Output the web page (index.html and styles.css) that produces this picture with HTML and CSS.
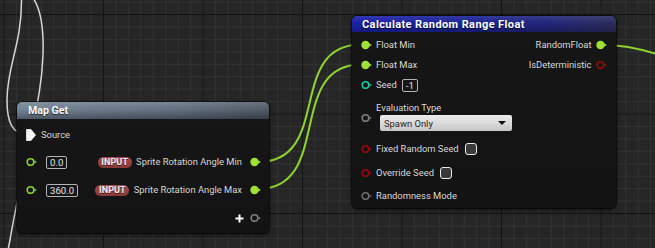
FILE: index.html
```html
<!DOCTYPE html>
<html>
<head>
<meta charset="utf-8">
<link rel="stylesheet" href="styles.css">
</head>
<body>
<div class="canvas">
  <svg class="wires" width="655" height="248" viewBox="0 0 655 248">
    <path class="wire-exec" d="M21.5,-2 C22,45 7,65 7,100 C7,122 12,134 27,134"/>
    <path class="wire-exec" d="M33,-2 C40,8 44,25 43,55 C42,85 36,110 30,140 C22,180 14,215 10,240 L8,250"/>
    <path class="wire-float" d="M258,162 C333,162 286,44.5 361,44.5"/>
    <path class="wire-float" d="M258,189 C333,189 286,64.5 361,64.5"/>
    <path class="wire-float" d="M604,45 C640,45 680,60 720,80"/>
  </svg>

  <div class="node node-mapget">
    <div class="node-header header-mapget">Map Get</div>
    <div class="mapget-body">
      <div class="row row-left">
        <svg class="pin-exec" width="10" height="12" viewBox="0 0 10 12"><path d="M0.5,0.5 H5 L9.5,6 L5,11.5 H0.5 Z"/></svg>
        <span class="label">Source</span>
      </div>
      <div class="row row-split">
        <div class="side">
          <svg class="pin pin-hollow pin-green" width="11" height="10" viewBox="0 0 11 10"><circle cx="4.5" cy="5" r="3.3"/><polygon points="8.6,3.4 10.8,5 8.6,6.6"/></svg>
          <span class="valbox">0.0</span>
        </div>
        <div class="side">
          <span class="badge">INPUT</span>
          <span class="label">Sprite Rotation Angle Min</span>
          <svg class="pin pin-filled pin-green" width="11" height="10" viewBox="0 0 11 10"><circle cx="4.5" cy="5" r="4.2"/><polygon points="8.2,3.2 10.8,5 8.2,6.8"/></svg>
        </div>
      </div>
      <div class="row row-split">
        <div class="side">
          <svg class="pin pin-hollow pin-green" width="11" height="10" viewBox="0 0 11 10"><circle cx="4.5" cy="5" r="3.3"/><polygon points="8.6,3.4 10.8,5 8.6,6.6"/></svg>
          <span class="valbox">360.0</span>
        </div>
        <div class="side">
          <span class="badge">INPUT</span>
          <span class="label">Sprite Rotation Angle Max</span>
          <svg class="pin pin-filled pin-green" width="11" height="10" viewBox="0 0 11 10"><circle cx="4.5" cy="5" r="4.2"/><polygon points="8.2,3.2 10.8,5 8.2,6.8"/></svg>
        </div>
      </div>
      <div class="row row-add">
        <svg class="plus" width="9" height="9" viewBox="0 0 9 9"><path d="M4.5,0.5 V8.5 M0.5,4.5 H8.5"/></svg>
        <svg class="pin pin-hollow pin-gray" width="11" height="10" viewBox="0 0 11 10"><circle cx="4.5" cy="5" r="3.3"/><polygon points="8.6,3.4 10.8,5 8.6,6.6"/></svg>
      </div>
    </div>
  </div>

  <div class="node node-calc">
    <div class="node-header header-calc">Calculate Random Range Float</div>
    <div class="calc-body">
      <div class="col col-in">
        <div class="crow">
          <svg class="pin pin-filled pin-green" width="11" height="10" viewBox="0 0 11 10"><circle cx="4.5" cy="5" r="4.2"/><polygon points="8.2,3.2 10.8,5 8.2,6.8"/></svg>
          <span class="label">Float Min</span>
        </div>
        <div class="crow">
          <svg class="pin pin-filled pin-green" width="11" height="10" viewBox="0 0 11 10"><circle cx="4.5" cy="5" r="4.2"/><polygon points="8.2,3.2 10.8,5 8.2,6.8"/></svg>
          <span class="label">Float Max</span>
        </div>
        <div class="crow crow-seed">
          <svg class="pin pin-hollow pin-teal" width="11" height="10" viewBox="0 0 11 10"><circle cx="4.5" cy="5" r="3.3"/><polygon points="8.6,3.4 10.8,5 8.6,6.6"/></svg>
          <span class="label">Seed</span>
          <span class="valbox valbox-seed">-1</span>
        </div>
        <div class="crow crow-eval">
          <svg class="pin pin-hollow pin-gray" width="11" height="10" viewBox="0 0 11 10"><circle cx="4.5" cy="5" r="3.3"/><polygon points="8.6,3.4 10.8,5 8.6,6.6"/></svg>
          <div class="eval">
            <span class="label">Evaluation Type</span>
            <div class="dropdown"><span>Spawn Only</span><span class="caret"></span></div>
          </div>
        </div>
        <div class="crow crow-check">
          <svg class="pin pin-hollow pin-red" width="11" height="10" viewBox="0 0 11 10"><circle cx="4.5" cy="5" r="3.3"/><polygon points="8.6,3.4 10.8,5 8.6,6.6"/></svg>
          <span class="label">Fixed Random Seed</span>
          <span class="checkbox"></span>
        </div>
        <div class="crow crow-check">
          <svg class="pin pin-hollow pin-red" width="11" height="10" viewBox="0 0 11 10"><circle cx="4.5" cy="5" r="3.3"/><polygon points="8.6,3.4 10.8,5 8.6,6.6"/></svg>
          <span class="label">Override Seed</span>
          <span class="checkbox"></span>
        </div>
        <div class="crow crow-last">
          <svg class="pin pin-hollow pin-dim" width="11" height="10" viewBox="0 0 11 10"><circle cx="4.5" cy="5" r="3.3"/><polygon points="8.6,3.4 10.8,5 8.6,6.6"/></svg>
          <span class="label">Randomness Mode</span>
        </div>
      </div>
      <div class="col col-out">
        <div class="crow">
          <span class="label">RandomFloat</span>
          <svg class="pin pin-filled pin-green" width="11" height="10" viewBox="0 0 11 10"><circle cx="4.5" cy="5" r="4.2"/><polygon points="8.2,3.2 10.8,5 8.2,6.8"/></svg>
        </div>
        <div class="crow">
          <span class="label">IsDeterministic</span>
          <svg class="pin pin-hollow pin-red" width="11" height="10" viewBox="0 0 11 10"><circle cx="4.5" cy="5" r="3.3"/><polygon points="8.6,3.4 10.8,5 8.6,6.6"/></svg>
        </div>
      </div>
    </div>
  </div>
</div>
</body>
</html>
```

FILE: styles.css
```css
html, body {
  margin: 0;
  padding: 0;
  background: #262626;
}

.canvas {
  position: relative;
  width: 655px;
  height: 248px;
  overflow: hidden;
  background-color: #262626;
  background-image:
    linear-gradient(90deg, #131313 1px, transparent 1px),
    linear-gradient(180deg, #131313 1px, transparent 1px),
    linear-gradient(90deg, #323232 1px, transparent 1px),
    linear-gradient(180deg, #323232 1px, transparent 1px);
  background-size: 99.5px 99.5px, 99.5px 99.5px, 12.4375px 12.4375px, 12.4375px 12.4375px;
  background-position: 103px 14px, 103px 14px, 103px 14px, 103px 14px;
  font-family: Roboto, "Liberation Sans", sans-serif;
}

.wires {
  position: absolute;
  left: 0;
  top: 0;
}

.wire-exec {
  fill: none;
  stroke: #d6d6d6;
  stroke-width: 1.5;
}

.wire-float {
  fill: none;
  stroke: #8fd42e;
  stroke-width: 2;
}

.node {
  position: absolute;
  box-sizing: border-box;
  display: flex;
  flex-direction: column;
  background: linear-gradient(180deg, #151615 0%, #121312 100%);
  border-radius: 5px;
  box-shadow: 0 0 0 1px rgba(0, 0, 0, 0.6), 0 2px 5px rgba(0, 0, 0, 0.55);
  color: #d8d8d8;
  font-size: 9.4px;
}

.node-mapget {
  left: 17px;
  top: 102px;
  width: 252px;
  height: 131px;
}

.node-calc {
  left: 352px;
  top: 16px;
  width: 264px;
  height: 192px;
}

.node-header {
  flex: none;
  display: flex;
  align-items: center;
  font-weight: bold;
  font-size: 10.6px;
  color: #ffffff;
  border-radius: 5px 5px 0 0;
  text-shadow: 0 1px 1px rgba(0, 0, 0, 0.7);
}

.header-mapget {
  height: 17px;
  padding-left: 11px;
  background:
    linear-gradient(180deg, rgba(255, 255, 255, 0.18) 0%, rgba(255, 255, 255, 0.05) 45%, rgba(0, 0, 0, 0.28) 100%),
    linear-gradient(90deg, #6c7c90 0%, #5c6a7b 60%, #48525e 100%);
}

.header-calc {
  height: 16px;
  padding-left: 10px;
  font-size: 11px;
  letter-spacing: 0.4px;
  background:
    linear-gradient(180deg, rgba(255, 255, 255, 0.1) 0%, rgba(0, 0, 0, 0) 45%, rgba(0, 0, 0, 0.25) 100%),
    linear-gradient(90deg, #1b22aa 0%, #1c2296 45%, #22267a 75%, #2a2c5c 100%);
}

.label {
  white-space: nowrap;
  color: #d9d9d9;
  line-height: 12px;
}

.pin {
  flex: none;
  display: block;
}

.pin-filled circle,
.pin-filled polygon {
  stroke: none;
}

.pin-hollow circle {
  fill: none;
  stroke-width: 1.6;
}

.pin-green circle { fill: #9fe235; }
.pin-green polygon { fill: #9fe235; }
.pin-hollow.pin-green circle { fill: none; stroke: #8fd62c; }
.pin-hollow.pin-green polygon { fill: #8fd62c; }

.pin-teal circle { stroke: #22c9a2; }
.pin-teal polygon { fill: #22c9a2; }

.pin-red circle { stroke: #980b0b; }
.pin-red polygon { fill: #980b0b; }

.pin-gray circle { stroke: #808080; }
.pin-gray polygon { fill: #808080; }

.pin-dim circle { stroke: #6e6e6e; }
.pin-dim polygon { fill: #6e6e6e; }

.pin-exec {
  flex: none;
  display: block;
}

.pin-exec path {
  fill: #f2f2f2;
  stroke: #f2f2f2;
  stroke-width: 0.8;
  stroke-linejoin: round;
}

/* Map Get body */
.mapget-body {
  display: grid;
  grid-template-rows: 20px 22px 22px 22px;
  row-gap: 6px;
  padding-top: 6px;
}

.row {
  display: flex;
  align-items: center;
}

.row-left {
  padding-left: 9px;
  gap: 5px;
}

.row-split {
  justify-content: space-between;
  padding-left: 9px;
  padding-right: 8px;
}

.side {
  display: flex;
  align-items: center;
}

.side .pin-hollow + .valbox {
  margin-left: 9px;
}

.side .badge + .label {
  margin-left: 4.5px;
}

.side .label + .pin {
  margin-left: 8px;
}

.row-add {
  justify-content: flex-end;
  padding-right: 8px;
  gap: 6px;
}

.plus path {
  stroke: #ffffff;
  stroke-width: 2;
  fill: none;
}

.valbox {
  box-sizing: border-box;
  height: 13px;
  line-height: 11px;
  padding: 0 3px;
  border: 1px solid #b4b4b4;
  border-radius: 2px;
  background: #161616;
  color: #e4e4e4;
  font-size: 9.6px;
}

.badge {
  box-sizing: border-box;
  height: 11px;
  line-height: 11px;
  padding: 0 3.5px;
  border-radius: 6px;
  background: linear-gradient(180deg, #a04c4c 0%, #8a3838 100%);
  color: #f4f0f0;
  font-weight: bold;
  font-size: 9px;
  letter-spacing: 0.1px;
  text-shadow: 0 1px 0 rgba(0, 0, 0, 0.6);
}

/* Calculate body */
.calc-body {
  display: flex;
  justify-content: space-between;
  padding-top: 2.5px;
}

.col {
  display: flex;
  flex-direction: column;
}

.col-in {
  padding-left: 8.5px;
}

.col-out {
  padding-right: 9.5px;
}

.crow {
  display: flex;
  align-items: center;
  height: 20px;
}

.col-in .crow .pin {
  margin-right: 4.5px;
}

.col-out .crow {
  justify-content: flex-end;
}

.col-out .crow .pin {
  margin-left: 4px;
}

.crow-seed {
  height: 21px;
}

.valbox-seed {
  margin-left: 5px;
}

.crow-eval {
  height: 41.5px;
  align-items: flex-start;
}

.crow-eval .pin {
  margin-top: 17.5px;
}

.eval {
  display: flex;
  flex-direction: column;
  padding-top: 6.5px;
}

.dropdown {
  box-sizing: border-box;
  margin-top: 1px;
  margin-left: 4px;
  width: 132px;
  height: 16px;
  display: flex;
  align-items: center;
  justify-content: space-between;
  padding: 0 6px 0 4px;
  border-radius: 2px;
  background: linear-gradient(180deg, #ececec 0%, #d8d8d8 55%, #c6c6c6 100%);
  color: #262626;
  font-size: 9.4px;
}

.caret {
  width: 0;
  height: 0;
  border-left: 4px solid transparent;
  border-right: 4px solid transparent;
  border-top: 4px solid #111111;
}

.crow-check {
  height: 24px;
}

.checkbox {
  box-sizing: border-box;
  width: 12px;
  height: 12px;
  margin-left: 6px;
  border: 1.5px solid #ececec;
  border-radius: 3px;
  background: #3a3a3a;
}

.crow-last {
  height: 22px;
}
```
